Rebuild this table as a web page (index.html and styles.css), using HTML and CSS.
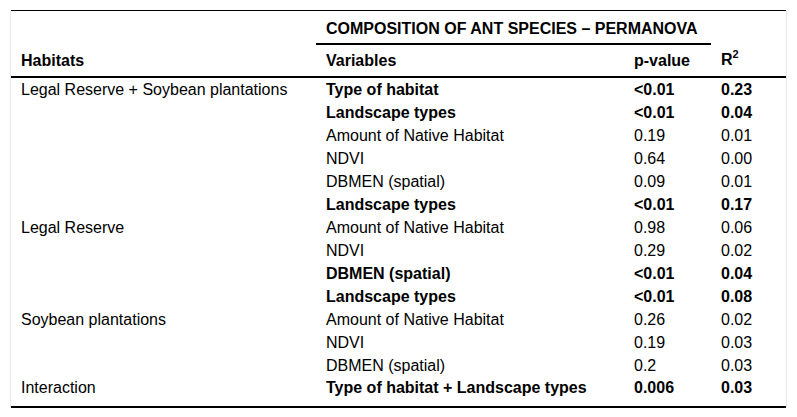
FILE: index.html
```html
<!DOCTYPE html>
<html>
<head>
<meta charset="utf-8">
<link rel="stylesheet" href="styles.css">
</head>
<body>
<div class="wrap">
<table class="tbl">
  <colgroup>
    <col class="c1"><col class="c2"><col class="c3"><col class="c4">
  </colgroup>
  <thead>
    <tr class="h1">
      <th rowspan="2" class="hab">Habitats</th>
      <th colspan="2" class="group">COMPOSITION OF ANT SPECIES – PERMANOVA</th>
      <th></th>
    </tr>
    <tr class="h2">
      <th>Variables</th>
      <th>p-value</th>
      <th>R<sup>2</sup></th>
    </tr>
  </thead>
  <tbody>
    <tr class="b"><td class="n">Legal Reserve + Soybean plantations</td><td>Type of habitat</td><td>&lt;0.01</td><td>0.23</td></tr>
    <tr class="b"><td class="n"></td><td>Landscape types</td><td>&lt;0.01</td><td>0.04</td></tr>
    <tr><td></td><td>Amount of Native Habitat</td><td>0.19</td><td>0.01</td></tr>
    <tr><td></td><td>NDVI</td><td>0.64</td><td>0.00</td></tr>
    <tr><td></td><td>DBMEN (spatial)</td><td>0.09</td><td>0.01</td></tr>
    <tr class="b"><td class="n"></td><td>Landscape types</td><td>&lt;0.01</td><td>0.17</td></tr>
    <tr><td>Legal Reserve</td><td>Amount of Native Habitat</td><td>0.98</td><td>0.06</td></tr>
    <tr><td></td><td>NDVI</td><td>0.29</td><td>0.02</td></tr>
    <tr class="b"><td class="n"></td><td>DBMEN (spatial)</td><td>&lt;0.01</td><td>0.04</td></tr>
    <tr class="b"><td class="n"></td><td>Landscape types</td><td>&lt;0.01</td><td>0.08</td></tr>
    <tr><td>Soybean plantations</td><td>Amount of Native Habitat</td><td>0.26</td><td>0.02</td></tr>
    <tr><td></td><td>NDVI</td><td>0.19</td><td>0.03</td></tr>
    <tr><td></td><td>DBMEN (spatial)</td><td>0.2</td><td>0.03</td></tr>
    <tr class="b last"><td class="n">Interaction</td><td>Type of habitat + Landscape types</td><td>0.006</td><td>0.03</td></tr>
  </tbody>
</table>
</div>
</body>
</html>
```
FILE: styles.css
```css
html, body {
  margin: 0;
  padding: 0;
  background: #fff;
}
body {
  font-family: "Liberation Sans", Arial, sans-serif;
  font-size: 16px;
  color: #000;
}
.wrap {
  margin: 10px 0 0 10px;
  width: 775px;
  border-left: 1px solid #e8e8e8;
  border-right: 1px solid #e8e8e8;
}
.tbl {
  width: 100%;
  border-collapse: collapse;
  table-layout: fixed;
  border-top: 1px solid #000;
  border-bottom: 2px solid #000;
}
.c1 { width: 305px; }
.c2 { width: 308px; }
.c3 { width: 87px; }
.c4 { width: 75px; }
th, td {
  text-align: left;
  padding: 0 0 0 10px;
  white-space: nowrap;
}
th {
  font-weight: bold;
}
.h1 th {
  height: 29px;
  vertical-align: middle;
  padding-top: 3px;
}
.h1 th.group {
  border-bottom: 2px solid #000;
}
.h2 th {
  height: 31px;
  vertical-align: middle;
  border-bottom: 2px solid #000;
}
th.hab {
  vertical-align: bottom;
  padding-bottom: 6px;
  border-bottom: 2px solid #000;
}
sup {
  font-size: 11px;
  line-height: 0;
  vertical-align: 7px;
}
td {
  height: 23px;
  line-height: 18px;
  vertical-align: middle;
}
tr.b td {
  font-weight: bold;
}
tr.b td.n {
  font-weight: normal;
}
tr.last td {
  height: 27px;
  vertical-align: top;
  padding-top: 2px;
}
```
